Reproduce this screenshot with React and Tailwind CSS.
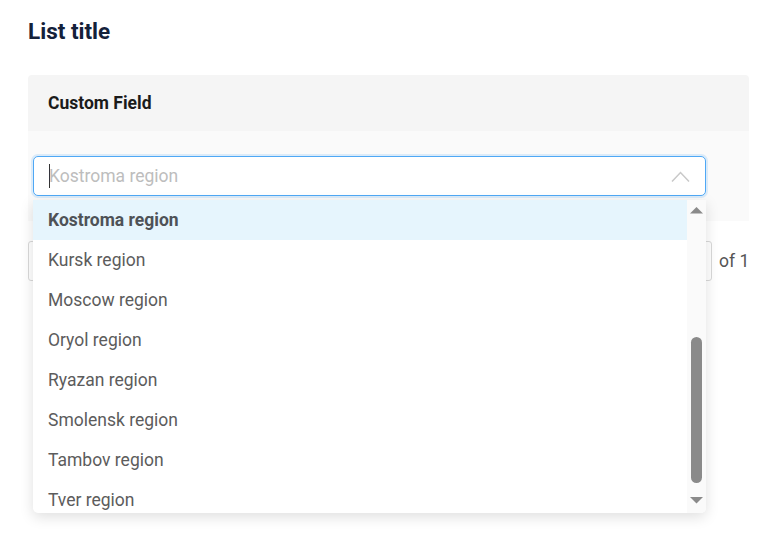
import React from "react";

const items = [
  "Kostroma region",
  "Kursk region",
  "Moscow region",
  "Oryol region",
  "Ryazan region",
  "Smolensk region",
  "Tambov region",
  "Tver region",
];

export default function App() {
  return (
    <div
      className="relative w-[783px] h-[558px] bg-white px-[28px] pt-[16px]"
      style={{ fontFamily: "Roboto, 'Liberation Sans', sans-serif" }}
    >
      <h1 className="text-[22.5px] leading-[30px] font-bold text-[#14213a]">List title</h1>

      <div className="mt-[29px] w-[721px] rounded-t-[4px] overflow-hidden">
        <div className="h-[56px] bg-[#f5f5f5] flex items-center pl-[20px] text-[17.5px] font-bold text-[#1b1b1b]">
          Custom Field
        </div>
        <div className="h-[90px] bg-[#fafafa] pl-[5px] pt-[25px]">
          <div className="relative w-[673px] h-[40px] bg-white border border-[#4fa8f5] rounded-[5px] shadow-[0_0_0_2px_rgba(79,168,245,0.18)] flex items-center pl-[15px]">
            <span className="w-px h-[24px] bg-[#333] mr-[-1px]" />
            <span className="text-[17.5px] text-[#bdbdbd]">Kostroma region</span>
            <svg className="absolute right-[15px] top-[14px]" width="19" height="11" viewBox="0 0 19 11">
              <path d="M1 10.5 L9.5 1.5 L18 10.5" fill="none" stroke="#c9c9c9" strokeWidth="1.5" />
            </svg>
          </div>
        </div>
      </div>

      <div className="mt-[20px] flex items-center h-[40px]">
        <div className="w-[684px] h-[40px] border border-[#d9d9d9] rounded-[3px] bg-white" />
        <span className="ml-[7px] text-[17.5px] text-[#555]">of 1</span>
      </div>

      <div className="absolute left-[33px] top-[200px] w-[673px] h-[313px] bg-white rounded-b-[5px] shadow-[0_4px_14px_rgba(0,0,0,0.13)] overflow-hidden flex">
        <div className="flex-1 overflow-hidden">
          {items.map((it, i) => (
            <div
              key={it}
              className={
                "h-[40px] flex items-center pl-[15px] text-[17.5px] " +
                (i === 0 ? "bg-[#e6f5fd] font-bold text-[#4e5257]" : "text-[#5c5c5c]")
              }
            >
              {it}
            </div>
          ))}
        </div>
        <div className="relative w-[19px] h-full bg-[#fafafa]">
          <svg className="absolute left-[3px] top-[7px]" width="13" height="7" viewBox="0 0 13 7">
            <path d="M0 6.5 L6.5 0 L13 6.5 Z" fill="#8a8a8a" />
          </svg>
          <div className="absolute left-[4px] top-[137px] w-[11px] h-[146px] rounded-full bg-[#8a8a8a]" />
          <svg className="absolute left-[3px] top-[297px]" width="13" height="7" viewBox="0 0 13 7">
            <path d="M0 0 L13 0 L6.5 6.5 Z" fill="#8a8a8a" />
          </svg>
        </div>
      </div>
    </div>
  );
}
